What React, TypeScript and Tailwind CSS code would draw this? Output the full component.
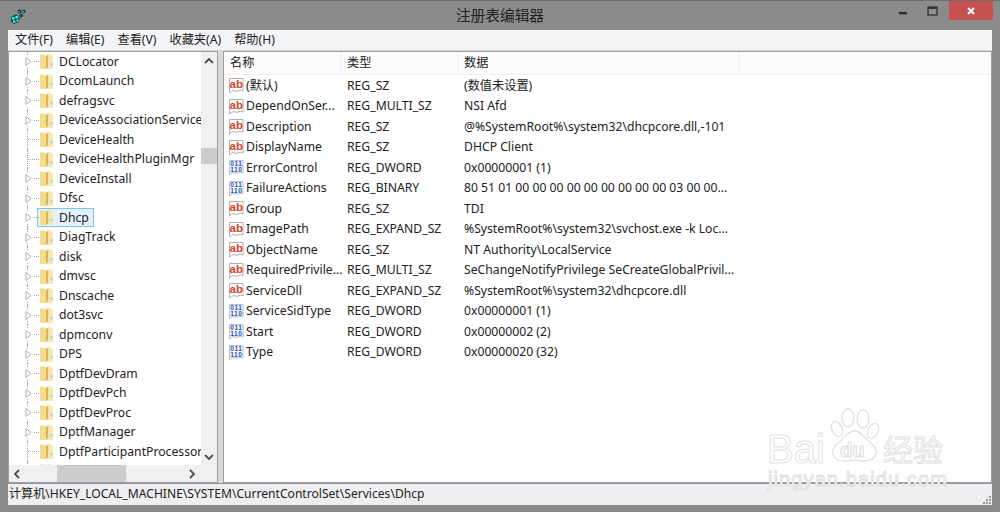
const font = { fontFamily: '"Noto Sans", "Noto Sans CJK SC", sans-serif' };

const tree: [string, boolean][] = [
  ["DCLocator", true],["DcomLaunch", true],["defragsvc", true],["DeviceAssociationService", true],
  ["DeviceHealth", false],["DeviceHealthPluginMgr", false],["DeviceInstall", true],["Dfsc", true],
  ["Dhcp", true],["DiagTrack", true],["disk", true],["dmvsc", true],["Dnscache", true],["dot3svc", true],
  ["dpmconv", true],["DPS", true],["DptfDevDram", true],["DptfDevPch", true],["DptfDevProc", true],
  ["DptfManager", true],["DptfParticipantProcessor", false],["", false],
];

const rows: [string, string, string, boolean][] = [
  ["(默认)", "REG_SZ", "(数值未设置)", true],
  ["DependOnSer...", "REG_MULTI_SZ", "NSI Afd", true],
  ["Description", "REG_SZ", "@%SystemRoot%\\system32\\dhcpcore.dll,-101", true],
  ["DisplayName", "REG_SZ", "DHCP Client", true],
  ["ErrorControl", "REG_DWORD", "0x00000001 (1)", false],
  ["FailureActions", "REG_BINARY", "80 51 01 00 00 00 00 00 00 00 00 00 03 00 00...", false],
  ["Group", "REG_SZ", "TDI", true],
  ["ImagePath", "REG_EXPAND_SZ", "%SystemRoot%\\system32\\svchost.exe -k Loc...", true],
  ["ObjectName", "REG_SZ", "NT Authority\\LocalService", true],
  ["RequiredPrivile...", "REG_MULTI_SZ", "SeChangeNotifyPrivilege SeCreateGlobalPrivil...", true],
  ["ServiceDll", "REG_EXPAND_SZ", "%SystemRoot%\\system32\\dhcpcore.dll", true],
  ["ServiceSidType", "REG_DWORD", "0x00000001 (1)", false],
  ["Start", "REG_DWORD", "0x00000002 (2)", false],
  ["Type", "REG_DWORD", "0x00000020 (32)", false],
];

function Folder() {
  return (
    <svg width="15" height="17" viewBox="0 0 15 17" className="shrink-0">
      <path d="M1 1.5 H5.5 L7 3 V16 H2 Q1 16 1 15 Z" fill="#f3dc8e" />
      <path d="M7 3 L9.5 1 V14 L7 16 Z" fill="#dcb552" />
      <path d="M9.5 1 H10.5 L14 3 V15 Q14 16 13 16 H7 L9.5 14 Z" fill="#f8e8ae" />
      <path d="M11.5 10 h2 v2.5 h-2z" fill="#a9cfe6" />
    </svg>
  );
}

function Expander({ show }: { show: boolean }) {
  return (
    <div className="relative w-[20px] h-full shrink-0">
      <div className="absolute left-[8px] -top-px -bottom-px border-l border-dotted border-[#a8a8a8]" />
      <div className="absolute left-[9px] top-[9px] w-[11px] border-t border-dotted border-[#a8a8a8]" />
      {show && (
        <svg width="9" height="11" viewBox="0 0 9 11" className="absolute left-[5px] top-[4px] bg-white">
          <path d="M2 1.5 L7 5.5 L2 9.5 Z" fill="#fff" stroke="#b0b0b0" />
        </svg>
      )}
    </div>
  );
}

const page = "M1.5 1.5 H15 V14 Q13 12.5 11 13.5 Q9 15 7 14 Q5 13 3.5 14.5 L1.5 16 Z";

function AbIcon() {
  return (
    <svg width="16" height="17" viewBox="0 0 16 17" className="shrink-0">
      <path d={page} fill="#fff" stroke="#b0b0b0" />
      <text x="8.3" y="11" textAnchor="middle" fontSize="11.5" fontWeight="700" fill="#d8432a" style={{ fontFamily: '"Liberation Sans", sans-serif' }}>ab</text>
    </svg>
  );
}

function BinIcon() {
  return (
    <svg width="16" height="17" viewBox="0 0 16 17" className="shrink-0">
      <path d={page} fill="#f2f7fd" stroke="#b8bfca" />
      <text x="8.3" y="7.2" textAnchor="middle" fontSize="6.6" fontWeight="700" letterSpacing="0.5" fill="#2857ad" style={{ fontFamily: '"Liberation Sans", sans-serif' }}>011</text>
      <text x="8.3" y="13.4" textAnchor="middle" fontSize="6.6" fontWeight="700" letterSpacing="0.5" fill="#2857ad" style={{ fontFamily: '"Liberation Sans", sans-serif' }}>110</text>
    </svg>
  );
}

function Chevron({ d }: { d: string }) {
  return (
    <svg width="10" height="10" viewBox="0 0 10 10">
      <path d={d} fill="none" stroke="#505050" strokeWidth="1.8" />
    </svg>
  );
}

function Watermark() {
  return (
    <div className="absolute left-[766px] top-[404px] w-[190px] h-[100px] pointer-events-none">
      <svg width="60" height="70" viewBox="0 0 60 70" className="absolute left-[62px] top-0" fill="#fff" stroke="#e2e2e2" strokeWidth="1.3">
        <ellipse cx="9" cy="24" rx="5" ry="8" transform="rotate(-25 9 24)" />
        <ellipse cx="20" cy="13" rx="6" ry="9" />
        <ellipse cx="35" cy="14" rx="6" ry="9" />
        <ellipse cx="45" cy="26" rx="5" ry="8" transform="rotate(25 45 26)" />
        <path d="M26.5 26 C34 26 37 34 44 39 C52 46 48 56 36 56 C32 56 30 55 26.5 55 C23 55 20 56 16 56 C5 56 1 46 9 39 C16 34 19 26 26.5 26 Z" />
      </svg>
      <span className="absolute left-[1px] top-[22px] text-[40px] leading-[44px] text-white [-webkit-text-stroke:1px_#e2e2e2]" style={{ fontFamily: '"Liberation Sans", sans-serif' }}>Bai</span>
      <span className="absolute left-[74px] top-[33px] text-[20px] leading-[24px] font-bold text-white [-webkit-text-stroke:1px_#dedede]" style={{ fontFamily: '"Liberation Sans", sans-serif' }}>du</span>
      <span className="absolute left-[117px] top-[25px] text-[30px] leading-[36px] text-white [-webkit-text-stroke:1px_#e0e0e0]" style={{ fontFamily: '"Noto Sans CJK SC", sans-serif' }}>经验</span>
      <span className="absolute left-[2px] top-[62px] whitespace-nowrap text-[20px] leading-[24px] tracking-[1.1px] text-white [-webkit-text-stroke:1px_#dedede]" style={{ fontFamily: '"Liberation Sans", sans-serif' }}>jingyan.baidu.com</span>
    </div>
  );
}

export default function App() {
  return (
    <div className="relative w-[1000px] h-[512px] bg-[#8b8b8b] flex flex-col overflow-hidden border-t border-[#6e6e6e] text-[12.2px] text-[#222]" style={font}>
      <div className="h-[29px] shrink-0 flex items-center relative">
        <svg width="17" height="16" viewBox="0 0 17 16" className="ml-[10px] mt-[2px]">
          <path d="M7 2 L10 0 L12 3 L9 5 Z M12 1 L15 0.5 L15.5 3.5 L12.5 4.5 Z" fill="#123a40" />
          <path d="M9 6 L12 4.5 L13.5 7 L10.5 9 Z" fill="#17484f" />
          <path d="M1 8 L6 5 L10 9 L9 13 L4 15 L1 13 Z" fill="#0f5a60" />
          <path d="M2 8 h2.5 v2.5 h-2.5z M5.5 7 h2.5 v2.5 h-2.5z M3 11.5 h2.5 v2.2 h-2.5z M6.5 10.5 h2 v2 h-2z" fill="#4fe0d8" />
          <path d="M12.5 2 h1.3 v1.3 h-1.3z M8.5 2.3 h1.2 v1.2 h-1.2z" fill="#63e0d8" />
        </svg>
        <div className="absolute left-0 right-0 top-[2px] text-center text-[14.7px] leading-[24px] text-[#222]">注册表编辑器</div>
        <div className="ml-auto flex items-start h-full self-start">
          <svg width="10" height="4" viewBox="0 0 10 4" className="mt-[11px] mr-[18px]"><rect y="0" width="8" height="2.4" fill="#2b2b2b" /></svg>
          <svg width="12" height="10" viewBox="0 0 12 10" className="mt-[5px] mr-[10px]"><rect x="1" y="1" width="9" height="8" fill="#8f8f8f" stroke="#333" strokeWidth="1.3" /><rect x="1" y="1" width="9" height="2" fill="#333" /></svg>
          <div className="w-[44px] h-[19px] bg-[#c75050] flex items-center justify-center mr-[7px]">
            <svg width="10" height="10" viewBox="0 0 10 10"><path d="M2 2 L8 8 M8 2 L2 8" stroke="#fff" strokeWidth="2" /></svg>
          </div>
        </div>
      </div>
      <div className="mx-[8px] h-[20px] shrink-0 bg-[#f3f4f6] flex items-center pl-[7px] gap-[13px]">
        <span>文件(F)</span><span>编辑(E)</span><span>查看(V)</span><span>收藏夹(A)</span><span>帮助(H)</span>
      </div>
      <div className="mx-[8px] flex-1 min-h-0 flex bg-[#d8d8d8] pt-[1px]">
        <div className="w-[210px] shrink-0 border border-[#9aa0a6] bg-white flex flex-col">
          <div className="flex-1 min-h-0 flex">
            <div className="flex-1 min-w-0 overflow-hidden pt-[0.2px] pl-[10px]">
              {tree.map(([name, exp], i) => (
                <div key={i} className="h-[19.5px] flex items-center whitespace-nowrap">
                  <Expander show={exp} />
                  {name === "Dhcp" ? (
                    <div className="flex items-center h-[19px] -ml-[2px] pl-px pr-[4px] bg-[#e2f1fb] border border-[#7fc4ea]">
                      <Folder />
                      <span className="ml-[5px]">{name}</span>
                    </div>
                  ) : (
                    <>
                      <Folder />
                      <span className="ml-[5px]">{name}</span>
                    </>
                  )}
                </div>
              ))}
            </div>
            <div className="w-[16px] shrink-0 bg-[#f0f0f0] flex flex-col items-center">
              <div className="h-[16px] mt-px flex items-center justify-center"><Chevron d="M1 7 L5 3 L9 7" /></div>
              <div className="flex-1 w-full relative">
                <div className="absolute top-[79px] left-0 right-0 h-[16px] bg-[#cdcdcd]" />
              </div>
              <div className="h-[16px] flex items-center justify-center"><Chevron d="M1 3 L5 7 L9 3" /></div>
            </div>
          </div>
          <div className="h-[17px] shrink-0 bg-[#f0f0f0] flex items-center">
            <div className="w-[16px] flex justify-center"><Chevron d="M7 1 L3 5 L7 9" /></div>
            <div className="ml-[32px] w-[69px] h-full bg-[#cdcdcd]" />
            <div className="ml-auto w-[50px] flex justify-center"><Chevron d="M3 1 L7 5 L3 9" /></div>
          </div>
        </div>
        <div className="w-[5px] shrink-0" />
        <div className="flex-1 min-w-0 border border-[#9aa0a6] bg-white flex flex-col">
          <div className="h-[23px] shrink-0 bg-[#fcfcfc] border-b border-[#e8f1fa] flex items-center">
            <div className="w-[118px] pl-[6px] h-full flex items-center border-r-2 border-[#f0f5fb]">名称</div>
            <div className="w-[117px] pl-[5px] h-full flex items-center border-r-2 border-[#f0f5fb]">类型</div>
            <div className="w-[281px] pl-[5px] h-full flex items-center border-r-2 border-[#f0f5fb]">数据</div>
          </div>
          <div className="pt-[0.7px]">
            {rows.map(([n, t, d, ab]) => (
              <div key={n} className="h-[20.5px] flex items-center whitespace-nowrap">
                <div className="w-[118px] pl-[4px] flex items-center gap-[2px]">
                  {ab ? <AbIcon /> : <BinIcon />}
                  <span>{n}</span>
                </div>
                <div className="w-[117px] pl-[5px]">{t}</div>
                <div className="pl-[5px]">{d}</div>
              </div>
            ))}
          </div>
        </div>
      </div>
      <div className="mx-[8px] mb-[7px] h-[22px] shrink-0 bg-[#efefef] border-t border-[#8d949b] flex items-center pl-[1px] relative text-[12.1px]">
        <span>计算机\HKEY_LOCAL_MACHINE\SYSTEM\CurrentControlSet\Services\Dhcp</span>
        <svg width="8" height="8" viewBox="0 0 8 8" className="absolute right-[1px] bottom-[1px]" fill="#9a9a9a">
          <rect x="6" y="0" width="2" height="2" /><rect x="3" y="3" width="2" height="2" /><rect x="6" y="3" width="2" height="2" /><rect x="0" y="6" width="2" height="2" /><rect x="3" y="6" width="2" height="2" /><rect x="6" y="6" width="2" height="2" />
        </svg>
      </div>
      <Watermark />
    </div>
  );
}
